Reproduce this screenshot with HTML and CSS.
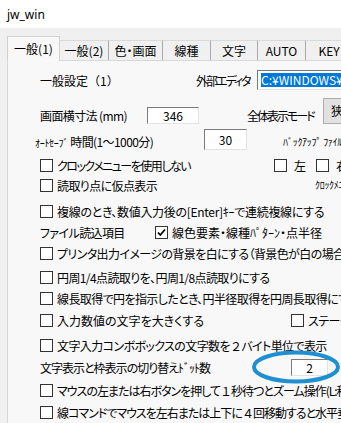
FILE: index.html
```html
<!doctype html>
<html lang="ja">
<head>
	<meta charset="UTF-8">
	<title>jw_win</title>
	<link rel="stylesheet" href="styles.css">
</head>
<body>
	<div class="titlebar">jw_win</div>
	<div class="dialog">
		<ul class="tabs">
			<li class="tab active w53">一般(1)</li>
			<li class="tab w49">一般(2)</li>
			<li class="tab w54">色・画面</li>
			<li class="tab w48">線種</li>
			<li class="tab w47">文字</li>
			<li class="tab w48">AUTO</li>
			<li class="tab w47">KEY</li>
			<li class="tab w60">DXF</li>
		</ul>
		<div class="panel">
			<div class="row">
				<span class="lbl head">一般設定（1）</span>
				<span class="lbl editor tighter">外部エディタ</span>
				<span class="edit path"><span class="sel">C:¥WINDOWS¥notepad.exe</span></span>
			</div>
			<div class="row sp15">
				<span class="lbl scr">画面横寸法 (mm)</span>
				<span class="edit w52">346</span>
				<span class="lbl mode tighter">全体表示モード</span>
				<span class="btn">狭</span>
			</div>
			<div class="row sp6">
				<span class="lbl save"><span class="tiny">ｵｰﾄｾｰﾌﾞ</span> 時間(1〜1000分)</span>
				<span class="edit w43">30</span>
				<span class="tiny backup">ﾊﾞｯｸｱｯﾌﾟ ﾌｧｲﾙ数</span>
			</div>
			<div class="row sp4">
				<span class="item clock"><i class="chk"></i><span class="tight">クロックメニューを使用しない</span></span>
				<span class="item lr"><i class="chk"></i>左</span>
				<span class="item"><i class="chk"></i>右</span>
			</div>
			<div class="row">
				<span class="item clock2"><i class="chk"></i>読取り点に仮点表示</span>
				<span class="tiny up">ｸﾛｯｸﾒﾆｭｰ</span>
			</div>
			<div class="row sp6">
				<span class="item loose"><i class="chk"></i>複線のとき、数値入力後の[Enter]ｷｰで連続複線にする</span>
			</div>
			<div class="row sp1">
				<span class="lbl file">ファイル読込項目</span>
				<span class="item wide"><i class="chk on"><svg width="11" height="11" viewBox="0 0 11 11"><path d="M2 5.5 L4.3 8 L9 2.5" fill="none" stroke="#000" stroke-width="1.8"/></svg></i>線色要素・線種ﾊﾟﾀｰﾝ・点半径</span>
			</div>
			<div class="row sp1">
				<span class="item"><i class="chk"></i>プリンタ出力イメージの背景を白にする（背景色が白の場合のみ）</span>
			</div>
			<div class="row sp4">
				<span class="item"><i class="chk"></i>円周1/4点読取りを、円周1/8点読取りにする</span>
			</div>
			<div class="row sp1">
				<span class="item"><i class="chk"></i>線長取得で円を指示したとき、円半径取得を円周長取得にする</span>
			</div>
			<div class="row sp2">
				<span class="item big wide"><i class="chk"></i>入力数値の文字を大きくする</span>
				<span class="item"><i class="chk"></i>ステータスバー</span>
			</div>
			<div class="row sp5">
				<span class="item"><i class="chk"></i>文字入力コンボボックスの文字数を<span class="fw">２</span>バイト単位で表示</span>
			</div>
			<div class="row sp2">
				<span class="lbl dot snug">文字表示と枠表示の切り替えﾄﾞｯﾄ数</span>
				<span class="edit w37">2</span>
			</div>
			<div class="row sp3">
				<span class="item snug"><i class="chk"></i>マウスの左または右ボタンを押して<span class="fw">１</span>秒待つとズーム操作(L:移動 R:拡大)</span>
			</div>
			<div class="row sp2">
				<span class="item snug"><i class="chk"></i>線コマンドでマウスを左右または上下に<span class="fw">４</span>回移動すると水平垂直</span>
			</div>
		</div>
	</div>
	<svg class="mark" width="92" height="36" viewBox="0 0 92 36"><ellipse cx="45" cy="17" rx="42" ry="14.5" fill="none" stroke="#1e8fd2" stroke-width="4"/></svg>
</body>
</html>
```

FILE: styles.css
```css
html,body{
	margin: 0;
	padding: 0;
}
ul{
	margin: 0;
	padding: 0;
	list-style: none;
}
body{
	width: 341px;
	height: 423px;
	overflow: hidden;
	position: relative;
	background: #f0f0f0;
	color: #000;
	font-family: "Noto Sans CJK JP", "Noto Sans", sans-serif;
	font-size: 12px;
	font-feature-settings: "palt";
	letter-spacing: -0.6px;
}
.titlebar{
	height: 28px;
	padding-left: 7px;
	background: #fff;
	line-height: 30px;
	letter-spacing: 0;
	font-family: "Noto Sans", "Liberation Sans", sans-serif;
}
.dialog{
	width: 460px;
	padding: 8px 0 0 7px;
}
.tabs{
	display: flex;
	align-items: flex-end;
	height: 24px;
}
.tab{
	box-sizing: border-box;
	height: 20px;
	border-top: 1px solid #dadada;
	border-right: 1px solid #a9a9a9;
	text-align: center;
	line-height: 19px;
	letter-spacing: 0;
	white-space: nowrap;
	flex: none;
}
.tab.active{
	height: 25px;
	margin-bottom: -1px;
	border: 1px solid #d0d0d0;
	border-bottom: none;
	background: #f8f8f8;
	line-height: 24px;
	position: relative;
	z-index: 1;
}
.w53{ width: 53px; }
.w49{ width: 49px; }
.w54{ width: 54px; }
.w48{ width: 48px; }
.w47{ width: 47px; }
.w60{ width: 60px; }
.panel{
	height: 400px;
	padding: 9px 0 0 32px;
	border: 1px solid #d9d9d9;
	background: #f8f8f8;
	white-space: nowrap;
}
.row{
	display: flex;
	align-items: center;
	height: 20px;
}
.sp1{ margin-top: 1px; }
.sp2{ margin-top: 2px; }
.sp3{ margin-top: 3px; }
.sp4{ margin-top: 4px; }
.sp5{ margin-top: 5px; }
.sp6{ margin-top: 6px; }
.sp15{ margin-top: 15px; }
.lbl,.item{
	flex: none;
}
.item{
	display: flex;
	align-items: center;
}
.wide{ letter-spacing: 0; }
.loose{ letter-spacing: -0.3px; }
.snug{ letter-spacing: -1px; }
.tight{ letter-spacing: -1.5px; }
.tighter{ letter-spacing: -2px; }
.fw{
	font-feature-settings: normal;
}
.head{
	width: 156px;
	font-feature-settings: normal;
	letter-spacing: 0;
}
.editor{ width: 61px; }
.scr{ width: 107px; }
.mode{ width: 76px; margin-left: 48px; }
.save{ width: 169px; margin-left: -5px; }
.file{ width: 115px; }
.dot{ width: 251px; }
.clock{ width: 234px; }
.clock2{ width: 275px; }
.big{ width: 251px; }
.lr{ width: 42px; }
.lr .chk,.lr + .item .chk{
	margin-right: 7px;
}
.tiny{
	font-size: 10px;
	letter-spacing: -0.3px;
	flex: none;
}
.backup{ margin-left: 36px; }
.up{ margin-top: -2px; }
.chk{
	box-sizing: border-box;
	width: 13px;
	height: 13px;
	margin-right: 4px;
	border: 1px solid #333;
	background: #fff;
	flex: none;
}
.chk svg{
	display: block;
}
.edit{
	box-sizing: border-box;
	display: flex;
	align-items: center;
	justify-content: center;
	height: 17px;
	border: 1px solid;
	border-color: #7a7a7a #e3e3e3 #e3e3e3 #7a7a7a;
	background: #fff;
	letter-spacing: 0;
	flex: none;
}
.w52{ width: 52px; }
.w43{ width: 43px; height: 21px; margin-top: -3px; }
.w37{ width: 37px; }
.path{
	width: 140px;
	height: 20px;
	padding-left: 3px;
	justify-content: flex-start;
}
.sel{
	background: #0078d7;
	color: #fff;
	line-height: 14px;
}
.btn{
	box-sizing: border-box;
	width: 40px;
	height: 26px;
	padding-left: 7px;
	margin-top: -8px;
	border: 1px solid #adadad;
	background: #e1e1e1;
	line-height: 24px;
	flex: none;
}
.mark{
	position: absolute;
	left: 251px;
	top: 350px;
}
```
